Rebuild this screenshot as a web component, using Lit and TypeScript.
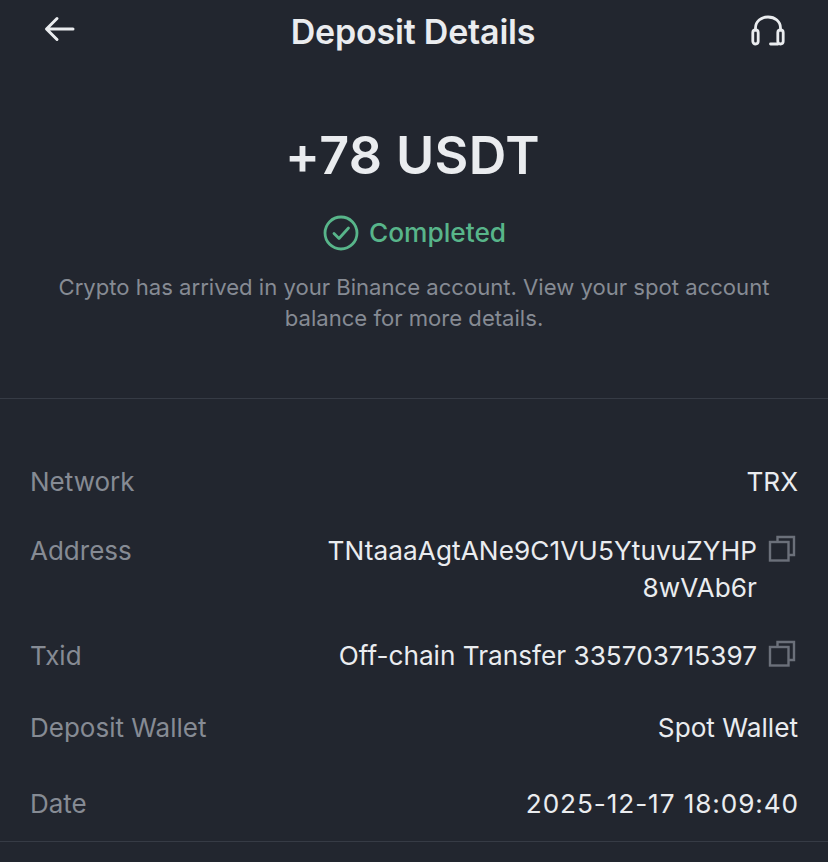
import { LitElement, html, css } from 'lit';
import { customElement } from 'lit/decorators.js';

const copyIcon = html`
  <svg class="copy" viewBox="0 0 28 28" fill="none" stroke="#6b707a" stroke-width="2.4">
    <path d="M9.500 6.500V2h16.500v18h-5.500" />
    <rect x="2" y="7" width="18.500" height="18.500" />
  </svg>
`;

@customElement('app-root')
export class AppRoot extends LitElement {
  static styles = css`
    :host {
      display: block;
      width: 828px;
      height: 862px;
      overflow: hidden;
      background: #22262f;
      font-family: 'Inter', 'Liberation Sans', sans-serif;
      color: #eaecef;
    }

    .header {
      display: flex;
      align-items: center;
      justify-content: space-between;
      height: 62px;
      padding: 0 42px 0 44px;
    }

    .title {
      font-size: 34px;
      font-weight: 600;
      letter-spacing: -0.2px;
    }

    .back {
      width: 32px;
      height: 26px;
      margin-bottom: 4px;
    }

    .support {
      width: 36px;
      height: 32px;
      margin-bottom: 1px;
    }

    .hero {
      display: flex;
      flex-direction: column;
      align-items: center;
      height: 337px;
      box-sizing: border-box;
      padding-top: 61px;
      border-bottom: 1px solid #363b45;
    }

    .amount {
      font-size: 52px;
      line-height: 66px;
      font-weight: 600;
      letter-spacing: 0.4px;
      margin-right: 3px;
    }

    .status {
      display: flex;
      align-items: center;
      gap: 10px;
      margin-top: 24px;
      margin-left: 1px;
      font-size: 26.300px;
      line-height: 40px;
      font-weight: 500;
      color: #58b58a;
    }

    .status svg {
      width: 36px;
      height: 36px;
    }

    .note {
      width: 780px;
      margin-top: 19px;
      font-size: 22.100px;
      line-height: 31px;
      text-align: center;
      color: #868b94;
    }

    .rows {
      display: flex;
      flex-direction: column;
      height: 443px;
      box-sizing: border-box;
      padding: 64px 30px 0;
      border-bottom: 1px solid #363b45;
    }

    .row {
      display: flex;
      justify-content: space-between;
      font-size: 26.200px;
      line-height: 37px;
    }

    .row.address {
      margin-top: 32px;
    }

    .row.txid {
      margin-top: 31px;
    }

    .row.wallet {
      margin-top: 35px;
    }

    .row.date {
      margin-top: 39px;
    }

    .label {
      font-size: 26px;
      color: #868b94;
    }

    .value {
      display: flex;
      align-items: flex-start;
      gap: 11px;
      text-align: right;
    }

    .addr {
      width: 440px;
      word-break: break-all;
      letter-spacing: 0.07px;
    }

    .stamp {
      letter-spacing: 0.9px;
      margin-right: -1px;
    }

    .copy {
      flex: none;
      width: 28px;
      height: 28px;
      margin: 3px 2px 0 0;
    }
  `;

  render() {
    return html`
      <div class="header">
        <svg class="back" viewBox="0 0 32 26" fill="none" stroke="#eaecef" stroke-width="3" stroke-linecap="round" stroke-linejoin="round">
          <path d="M29 13H3M13 2.500L2.500 13L13 23.500" />
        </svg>
        <div class="title">Deposit Details</div>
        <svg class="support" viewBox="0 0 36 32" fill="none" stroke="#eaecef" stroke-width="2.800" stroke-linecap="round">
          <path d="M5.500 15V13C5.500 6.500 11 2 18 2S30.500 6.500 30.500 13V15" />
          <rect x="2.800" y="15" width="5.400" height="14" rx="2.700" />
          <rect x="27.800" y="15" width="5.400" height="14" rx="2.700" />
          <path d="M20.500 29H28" />
        </svg>
      </div>

      <div class="hero">
        <div class="amount">+78 USDT</div>
        <div class="status">
          <svg viewBox="0 0 36 36" fill="none" stroke="#58b58a" stroke-width="2.800" stroke-linecap="round" stroke-linejoin="round">
            <circle cx="18" cy="18" r="16" />
            <path d="M11 18.500L16 23.500L25.500 13" />
          </svg>
          Completed
        </div>
        <div class="note">
          Crypto has arrived in your Binance account. View your spot account<br />balance for more details.
        </div>
      </div>

      <div class="rows">
        <div class="row"><span class="label">Network</span><span class="value">TRX</span></div>
        <div class="row address">
          <span class="label">Address</span>
          <span class="value"><span class="addr">TNtaaaAgtANe9C1VU5YtuvuZYHP 8wVAb6r</span>${copyIcon}</span>
        </div>
        <div class="row txid">
          <span class="label">Txid</span>
          <span class="value">Off-chain Transfer 335703715397 ${copyIcon}</span>
        </div>
        <div class="row wallet"><span class="label">Deposit Wallet</span><span class="value">Spot Wallet</span></div>
        <div class="row date"><span class="label">Date</span><span class="value stamp">2025-12-17 18:09:40</span></div>
      </div>
    `;
  }
}
